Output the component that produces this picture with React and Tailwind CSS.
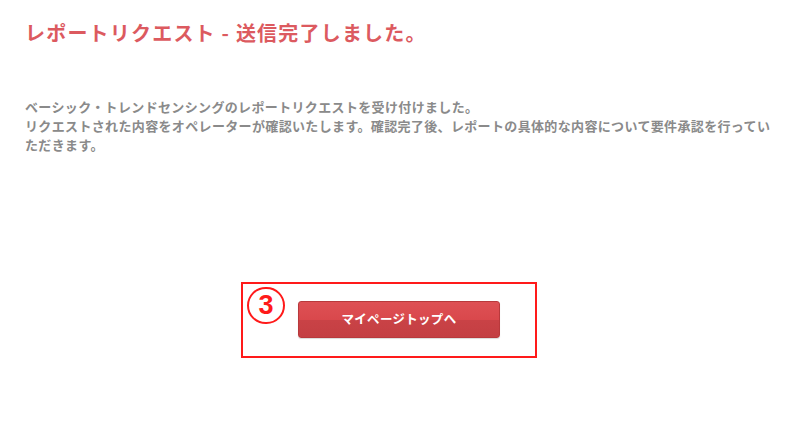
export default function App() {
    return (
        <div className="w-[800px] h-[428px] bg-white overflow-hidden font-['Noto_Sans_CJK_JP','Noto_Sans',sans-serif]">
            <div className="px-[25px] pt-[19px]">
                <h1 className="text-[20px] leading-[28px] font-bold text-[#dc5a5f] tracking-[1.2px]">
                    レポートリクエスト - 送信完了しました。
                </h1>
                <div className="mt-[50px] text-[13px] leading-[19px] font-bold text-[#8a8a8a] tracking-[0.35px]">
                    <p>ベーシック・トレンドセンシングのレポートリクエストを受け付けました。</p>
                    <p>リクエストされた内容をオペレーターが確認いたします。確認完了後、レポートの具体的な内容について要件承認を行っていただきます。</p>
                </div>
            </div>

            <div className="ml-[241px] mt-[128px] w-[296px] h-[76px] border-2 border-[#ff1a1a] flex items-start pt-[3px] pl-[4px]">
                <div className="w-[38px] h-[37px] rounded-full border-[2.5px] border-[#ff1a1a] flex items-center justify-center text-[#ff1a1a] text-[27px] font-bold leading-none font-['Liberation_Sans',sans-serif]">
                    3
                </div>
                <button
                    type="button"
                    className="ml-[13px] mt-[14px] w-[202px] h-[37px] rounded-[3px] border border-[#b8393c] bg-[linear-gradient(to_bottom,#de5054_0%,#d9484c_50%,#c94246_52%,#c43f43_100%)] text-white text-[12.5px] font-bold tracking-[0.3px] shadow-[0_1px_1px_rgba(0,0,0,0.15)]"
                >
                    マイページトップへ
                </button>
            </div>
        </div>
    );
}
